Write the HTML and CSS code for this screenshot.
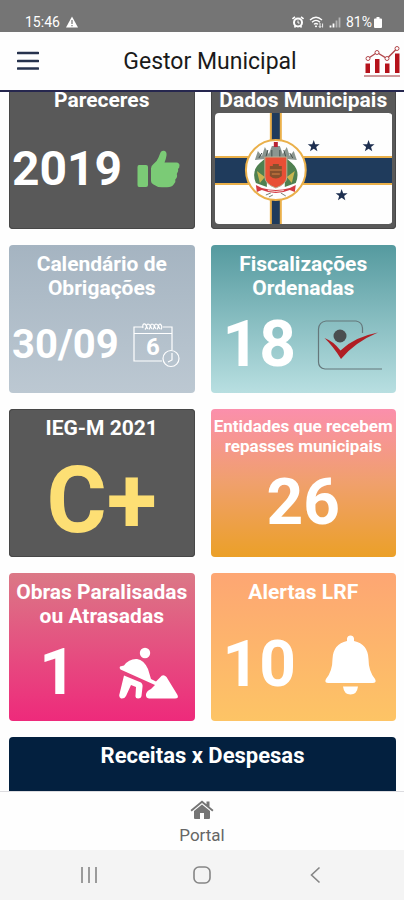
FILE: index.html
```html
<!DOCTYPE html>
<html lang="pt-BR">
<head>
  <meta charset="UTF-8">
  <meta name="viewport" content="width=device-width, initial-scale=1.0">
  <title>Gestor Municipal</title>
  <link rel="stylesheet" href="styles.css">
</head>
<body>
  <div class="status-bar">
    <span>15:46</span>
    <svg class="warning-icon" width="12" height="12" viewBox="0 0 12 12">
      <path d="M6 0.5 L12 11.5 H0 Z" fill="#fff"/>
      <path d="M6 4 V8 M6 9 V10.3" stroke="#757575" stroke-width="1.2"/>
    </svg>
    <div class="status-icons">
      <svg width="12" height="12" viewBox="0 0 12 12">
        <circle cx="6" cy="6.5" r="4" fill="none" stroke="#fff" stroke-width="2"/>
        <path d="M0.5 3 L3 0.8 M11.5 3 L9 0.8 M2.5 11.5 L3.5 10 M9.5 11.5 L8.5 10" stroke="#fff" stroke-width="1.6"/>
        <path d="M6 4.5 V7 H7.5" fill="none" stroke="#fff"/>
      </svg>
      <svg width="15" height="12" viewBox="0 0 15 12">
        <path d="M1 4 Q7 -1.5 13 4 M3 6.2 Q7 2.5 11 6.2 M5 8.4 Q7 6.5 9 8.4" fill="none" stroke="#fff" stroke-width="1.3"/>
        <path d="M7 9 L8.2 10.4 L7 11.6 L5.8 10.4 Z" fill="#fff"/>
        <path d="M11 7 V11.5 M9.8 10.2 L11 11.5 L12.2 10.2 M13.6 11.5 V7.5" fill="none" stroke="#fff" stroke-width="0.9"/>
      </svg>
      <svg width="12" height="12" viewBox="0 0 12 12">
        <path d="M1.5 9.5 V11.5 M4.5 7.5 V11.5" stroke="#fff" stroke-width="1.8"/>
        <path d="M7.5 4.5 V11.5 M10.5 1.5 V11.5" stroke="#b4b4b4" stroke-width="1.8"/>
      </svg>
      <span>81%</span>
      <svg class="battery-icon" width="8" height="12" viewBox="0 0 8 12">
        <path d="M2.5 1 H5.5 V2.5 H7 Q8 2.5 8 3.5 V11 Q8 12 7 12 H1 Q0 12 0 11 V3.5 Q0 2.5 1 2.5 H2.5 Z" fill="#fff"/>
      </svg>
    </div>
  </div>

  <header class="app-header">
    <button class="menu-btn" type="button" aria-label="Menu">
      <svg width="22" height="20" viewBox="0 0 22 20">
        <path d="M1 2 H21 M1 10 H21 M1 17.5 H21" stroke="#26324d" stroke-width="2.6" stroke-linecap="round"/>
      </svg>
    </button>
    <h1>Gestor Municipal</h1>
    <a class="logo" href="#" aria-label="Indicadores">
      <svg width="37" height="33" viewBox="0 0 37 33">
        <path d="M1.5 18.5 H6 V28 H1.5 Z M11 14 H15.5 V28 H11 Z M21 18.5 H25.5 V28 H21 Z M31 8.5 H35.5 V28 H31 Z" fill="#b5121b"/>
        <path d="M4 13.5 L13 7.5 L23 13.5 L33 3.5" fill="none" stroke="#b3484c" stroke-width="1.4"/>
        <g fill="#fff" stroke="#b3484c" stroke-width="1">
          <circle cx="4" cy="13.5" r="2"/>
          <circle cx="13" cy="7.5" r="2"/>
          <circle cx="23" cy="13.5" r="2"/>
          <circle cx="33" cy="3.5" r="2"/>
        </g>
        <path d="M0 31 H36" stroke="#cf9a9c" stroke-width="2"/>
      </svg>
    </a>
  </header>

  <main class="content">
    <div class="tiles">
      <a class="tile tile-dark" href="#">
        <h2>Pareceres</h2>
        <div class="tile-body split">
          <span class="value value-md">2019</span>
          <svg width="43" height="38" viewBox="0 0 43 38">
            <path d="M2 15 H9 Q11 15 11 17 V35 Q11 37 9 37 H2 Q0.5 37 0.5 35 V17 Q0.5 15 2 15 Z" fill="#7bcb76"/>
            <path d="M14 18.5 Q14 15.5 16.5 14 Q20 11.5 21.5 7.5 L23.5 2.5 Q24.5 0.3 27 0.8 Q30 1.6 29.5 5.5 Q29 9 27.5 12.5 H39.5 Q42.5 12.8 42.5 15.5 Q42.5 18 41 18.7 Q42 21.5 39.8 24 Q40.8 27 38.3 29.5 Q39 32 37 34 Q35 37.3 30 37.3 H25 Q20 37.3 16.5 34.5 Q14 33.5 14 31 Z" fill="#7bcb76"/>
          </svg>
        </div>
      </a>

      <a class="tile tile-dark" href="#">
        <h2>Dados Municipais</h2>
        <svg class="flag" viewBox="0 0 178 111" preserveAspectRatio="none">
          <rect width="178" height="111" rx="4" fill="#fefefe"/>
          <rect x="55" width="12" height="111" fill="#eab04a"/>
          <rect y="43" width="178" height="29" fill="#eab04a"/>
          <rect x="57" width="8" height="111" fill="#1f3b5c"/>
          <rect y="45" width="178" height="25" fill="#1f3b5c"/>
          <circle cx="61" cy="57" r="30" fill="#fefefe" stroke="#eab04a" stroke-width="2"/>
          <path d="M45 50 Q36 58 41 70 L52 74 V44 Z M77 50 Q86 58 81 70 L70 74 V44 Z" fill="#4f8050"/>
          <path d="M42 58 L50 64 L45 70 Z M80 58 L72 64 L77 70 Z" fill="#c8b550"/>
          <path d="M40 47 L43 38 L47 43 L50 34 L54 41 L57 33 H65 L68 41 L72 34 L75 43 L79 38 L82 47 L72 46 H50 Z" fill="#8b9690"/>
          <path d="M44 45 L47 40 M51 44 L53 37 M71 44 L69 37 M78 45 L75 40 M57 44 V37 M65 44 V37" stroke="#444f4c"/>
          <path d="M59 29 H63 V34 H59 Z" fill="#b92433"/>
          <path d="M50 44 H72 V64 Q72 71 61 75 Q50 71 50 64 Z" fill="#e84f35" stroke="#b8b095"/>
          <path d="M55 53 H58 V51 H64 V53 H67 V63 Q61 68 55 63 Z" fill="#87502d"/>
          <path d="M55 57 H67 M57 61 H65" stroke="#d98345"/>
          <path d="M41 72 L47 75 Q61 79 75 75 L81 72 L80 79 L75 77 Q61 83 47 77 L42 79 Z" fill="#d33a43"/>
          <path d="M53 77.5 Q61 79.5 69 77.5" fill="none" stroke="#f4d8d0"/>
          <path d="M51 82 L56 80 M66 80 L71 83 M54 84 L58 82" stroke="#777f72"/>
          <g fill="#1e2f50">
            <path id="star" d="M99 27 L100.5 31.2 L105 31.3 L101.5 34 L102.7 38.3 L99 35.8 L95.3 38.3 L96.5 34 L93 31.3 L97.5 31.2 Z"/>
            <use href="#star" x="55"/>
            <use href="#star" x="28" y="49"/>
          </g>
        </svg>
      </a>

      <a class="tile tile-gray" href="#">
        <h2>Calendário de Obrigações</h2>
        <div class="tile-body split">
          <span class="value value-sm">30/09</span>
          <svg width="47" height="46" viewBox="0 0 47 46">
            <g fill="none" stroke="#fff" stroke-width="1.2">
              <path d="M10 5 H1 V39 H29 M30 5 H39 V28 M1 11.5 H39"/>
              <path d="M10 6 Q9 1.5 12 2 Q15 4 12 7.5 M15 7 Q12 3 15 2 Q19 3 16 7.5 M19 7 Q16 3 19 2 Q23 3 20 7.5 M23 7 Q20 3 23 2 Q27 3 24 7.5 M27 7 Q24 3 27 2 Q30 4 28 7.5"/>
              <circle cx="38" cy="36.5" r="8"/>
              <path d="M39 31 V38 L35 40"/>
            </g>
            <text class="calendar-day" x="20" y="33" text-anchor="middle">6</text>
          </svg>
        </div>
      </a>

      <a class="tile tile-teal" href="#">
        <h2>Fiscalizações Ordenadas</h2>
        <div class="tile-body split">
          <span class="value">18</span>
          <svg width="66" height="50" viewBox="0 0 66 50">
            <path d="M65 49 H8 Q1.5 48 1.5 42 V9 Q2 2 9 1 H39 Q45 2 45.5 8 V13" fill="none" stroke="#65777b" stroke-width="1.2"/>
            <circle cx="23" cy="16" r="6.5" fill="#4a4e50"/>
            <path d="M7.5 18 Q16 21 23.5 30.5 Q37 17 61 12.5 Q38 22 24 39 Q16 26 7.5 18 Z" fill="#b01e24"/>
          </svg>
        </div>
      </a>

      <a class="tile tile-dark" href="#">
        <h2>IEG-M 2021</h2>
        <div class="tile-body">
          <span class="value value-lg">C+</span>
        </div>
      </a>

      <a class="tile tile-peach" href="#">
        <h2 class="small-title">Entidades que recebem repasses municipais</h2>
        <div class="tile-body">
          <span class="value">26</span>
        </div>
      </a>

      <a class="tile tile-pink" href="#">
        <h2>Obras Paralisadas ou Atrasadas</h2>
        <div class="tile-body split">
          <span class="value">1</span>
          <svg width="60" height="52" viewBox="0 0 60 52">
            <g fill="#fff">
              <circle cx="26" cy="6" r="5.2"/>
              <path d="M1 19.5 L5 18.5 Q10 11.5 18 12 Q25 13 29 22 L32 32 L37 34.5 L41 30.5 Q44 26.5 47.5 30 L58.5 48 Q60 51.5 56 51.5 H30 Q26.5 51 27 47 Q28 43.5 32 42 L36 38 L1.5 22.5 Q0 21 1 19.5 Z"/>
              <path d="M5 28.5 L22 35.5 Q24 37 23.5 40 L22.5 49 Q22 51.5 19 51.5 Q16 51.5 16.5 48.5 L17 40 L12 38 L7 49 Q5.5 52 2 51.5 Q-0.5 50 0.5 47 Z"/>
            </g>
          </svg>
        </div>
      </a>

      <a class="tile tile-orange" href="#">
        <h2>Alertas LRF</h2>
        <div class="tile-body split">
          <span class="value">10</span>
          <svg width="51" height="60" viewBox="0 0 51 60">
            <g fill="#fff">
              <path d="M22 6 V3.5 Q22.5 0.5 25.5 0.5 Q28.5 0.5 29 3.5 V6 Q43 9 43.5 24 Q43.5 36 50 44 Q52 48 48 48 H3 Q-1 48 1 44 Q7.5 36 7.5 24 Q8 9 22 6 Z"/>
              <path d="M18 51.5 H33 Q32 59.5 25.5 59.5 Q19 59.5 18 51.5 Z"/>
            </g>
          </svg>
        </div>
      </a>

      <a class="tile tile-navy tile-wide" href="#">
        <h2>Receitas x Despesas</h2>
      </a>
    </div>
  </main>

  <nav class="tab-bar">
    <a href="#">
      <svg width="24" height="20" viewBox="0 0 24 20">
        <path d="M0.5 10 L12 0.5 L16.5 4.2 V1.5 H19.5 V6.7 L23.5 10 L22.3 11.5 L12 3 L1.7 11.5 Z" fill="#757575"/>
        <path d="M4 11 L12 4.5 L20 11 V18 Q20 19 19 19 H14 V13 H10 V19 H5 Q4 19 4 18 Z" fill="#757575"/>
      </svg>
      <span>Portal</span>
    </a>
  </nav>

  <div class="system-bar">
    <button type="button" aria-label="Recentes">
      <svg width="18" height="18" viewBox="0 0 18 18">
        <path d="M2 1 V17 M9 1 V17 M16 1 V17" stroke="#858585" stroke-width="1.6"/>
      </svg>
    </button>
    <button type="button" aria-label="Início">
      <svg width="18" height="18" viewBox="0 0 18 18">
        <rect x="1" y="1" width="16" height="16" rx="5" fill="none" stroke="#858585" stroke-width="1.6"/>
      </svg>
    </button>
    <button type="button" aria-label="Voltar">
      <svg width="18" height="18" viewBox="0 0 18 18">
        <path d="M13.5 1.5 L5.5 9 L13.5 16.5" fill="none" stroke="#858585" stroke-width="1.6"/>
      </svg>
    </button>
  </div>
</body>
</html>
```

FILE: styles.css
```css
* { box-sizing: border-box; }
html, body {
  margin: 0;
  padding: 0;
}
body {
  display: flex;
  flex-direction: column;
  height: 100vh;
  background: #fefefe;
  font-family: Roboto, 'Liberation Sans', sans-serif;
}
h1, h2 {
  margin: 0;
}
svg {
  display: block;
}
a {
  color: inherit;
  text-decoration: none;
}
button {
  display: flex;
  align-items: center;
  justify-content: center;
  padding: 0;
  border: none;
  background: none;
  cursor: pointer;
}
.status-bar {
  display: flex;
  align-items: center;
  flex-shrink: 0;
  height: 32px;
  padding: 12px 22px 0 25px;
  background: #757575;
  color: #fff;
  font-size: 14px;
  line-height: 20px;
}
.warning-icon {
  margin-left: 6px;
}
.status-icons {
  display: flex;
  align-items: center;
  gap: 5px;
  margin-left: auto;
}
.battery-icon {
  margin-left: -3px;
}
.app-header {
  display: flex;
  align-items: center;
  flex-shrink: 0;
  height: 60px;
  padding-right: 3px;
  border-bottom: 2px solid #26274f;
}
.menu-btn {
  width: 56px;
  height: 48px;
}
.app-header h1 {
  flex: 1;
  padding-top: 2px;
  font-size: 23px;
  font-weight: 400;
  line-height: 28px;
  color: #1a1a1a;
  text-align: center;
}
.content {
  flex: 1;
  min-height: 0;
  overflow: hidden;
}
/* the list rests slightly scrolled under the header */
.tiles {
  display: grid;
  grid-template-columns: 1fr 1fr;
  grid-auto-rows: 148px;
  gap: 16px;
  margin-top: -11px;
  padding: 0 8px 0 9px;
}
.tile {
  display: flex;
  flex-direction: column;
  min-width: 0;
  padding-top: 7px;
  border-radius: 4px;
  color: #fff;
  text-align: center;
}
.tile h2 {
  padding: 0 16px;
  font-size: 21px;
  font-weight: 700;
  line-height: 24px;
}
.tile-pink h2, .tile-dark h2 {
  padding: 0;
}
.tile .small-title {
  padding: 0;
  font-size: 17px;
  line-height: 20px;
}
.tile-body {
  display: grid;
  flex: 1;
  align-items: center;
  justify-items: center;
}
.split {
  grid-template-columns: 1fr 1fr;
  padding: 0 0 4px 3px;
}
.tile-wide {
  grid-column: 1 / -1;
}
.tile-dark {
  background: #595959;
  box-shadow: inset 0 0 0 1px #474747;
}
.tile-gray {
  background: linear-gradient(#a5b4c1, #bcc8d2);
}
.tile-teal {
  background: linear-gradient(#559a9f, #b8dfe1);
}
.tile-peach {
  background: linear-gradient(#fb8fac, #f0a06c 50%, #eba028);
}
.tile-peach .tile-body {
  padding-bottom: 8px;
}
.tile-pink {
  background: linear-gradient(#db7886, #ee2a7b);
}
.tile-orange {
  background: linear-gradient(#fda673, #fdc465);
}
.tile-orange .tile-body {
  padding-top: 4px;
  padding-bottom: 0;
}
.tile-navy {
  background: #03203f;
}
.tile-navy h2 {
  font-size: 22px;
}
.value {
  font-size: 64px;
  font-weight: 700;
  line-height: 64px;
}
.value-sm {
  font-size: 40px;
}
.value-md {
  font-size: 48px;
}
.value-lg {
  padding-top: 4px;
  font-size: 92px;
  color: #fddf74;
}
.calendar-day {
  font-size: 24px;
  font-weight: 700;
  fill: #fff;
}
.flag {
  flex: 1;
  width: calc(100% - 8px);
  min-height: 0;
  margin: 1px 4px 5px;
}
.tab-bar {
  display: flex;
  justify-content: center;
  flex-shrink: 0;
  height: 59px;
  padding-top: 8px;
  border-top: 1px solid #dcdce0;
}
.tab-bar a {
  display: flex;
  flex-direction: column;
  align-items: center;
  gap: 5px;
  font-size: 17px;
  line-height: 20px;
  color: #666;
}
.system-bar {
  display: grid;
  grid-template-columns: repeat(3, 1fr);
  flex-shrink: 0;
  height: 50px;
  padding: 0 8%;
  background: #f4f4f4;
}
```
